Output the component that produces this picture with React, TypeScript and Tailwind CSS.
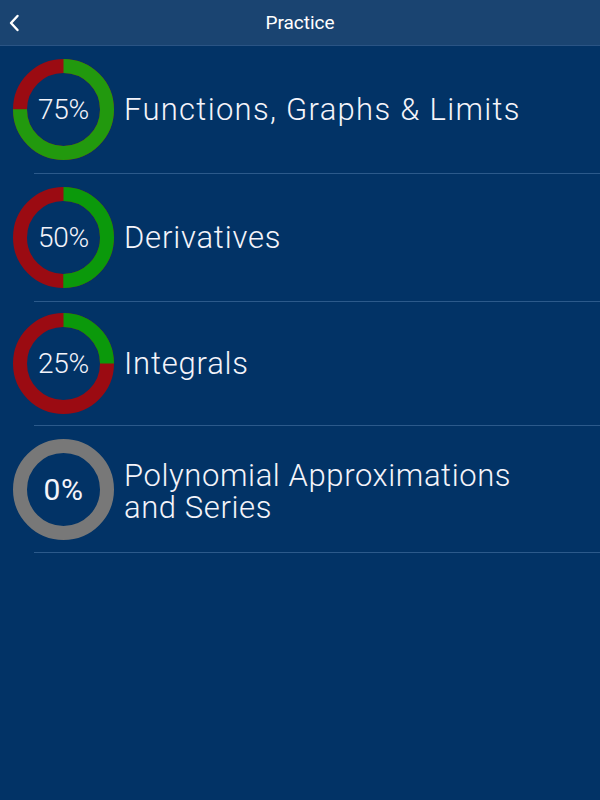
import React from "react";

type Item = { pct: number; label: string[]; h: string; green: string; track: string; mt: string };

const items: Item[] = [
  { pct: 75, label: ["Functions, Graphs & Limits"], h: "h-[127px]", green: "#22990e", track: "tracking-[1.3px]", mt: "mt-0" },
  { pct: 50, label: ["Derivatives"], h: "h-[127px]", green: "#0b990b", track: "tracking-[0.8px]", mt: "mt-0" },
  { pct: 25, label: ["Integrals"], h: "h-[123px]", green: "#0b990b", track: "tracking-[0.8px]", mt: "mt-0" },
  { pct: 0, label: ["Polynomial Approximations", "and Series"], h: "h-[126px]", green: "#0b990b", track: "tracking-[0.6px]", mt: "mt-[5px]" },
];

function Donut({ pct, green }: { pct: number; green: string }) {
  const size = 101;
  const sw = 14;
  const r = (size - sw) / 2;
  const c = 2 * Math.PI * r;
  const zero = pct === 0;
  return (
    <div className="relative w-[101px] h-[101px] shrink-0">
      <svg width={size} height={size} viewBox={`0 0 ${size} ${size}`} className="absolute inset-0">
        {zero ? (
          <circle cx={size / 2} cy={size / 2} r={r} fill="none" stroke="#787878" strokeWidth={sw} />
        ) : (
          <>
            <circle cx={size / 2} cy={size / 2} r={r} fill="none" stroke="#9b0b12" strokeWidth={sw} />
            <circle
              cx={size / 2}
              cy={size / 2}
              r={r}
              fill="none"
              stroke={green}
              strokeWidth={sw}
              strokeDasharray={`${(c * pct) / 100} ${c}`}
              transform={`rotate(-90 ${size / 2} ${size / 2})`}
            />
          </>
        )}
      </svg>
      <div
        className={`absolute inset-0 flex items-center justify-center text-[#f4f4fa] ${
          zero ? "text-[30px] font-normal tracking-[0.5px]" : "text-[28px] font-light tracking-[-0.3px]"
        }`}
        style={{ fontFamily: "Roboto, 'Liberation Sans', sans-serif" }}
      >
        {pct}%
      </div>
    </div>
  );
}

export default function App() {
  return (
    <div className="w-[600px] h-[800px] bg-[#023366] flex flex-col" style={{ fontFamily: "Roboto, 'Liberation Sans', sans-serif" }}>
      <div className="h-[46px] bg-[#1a4471] border-b border-[#2a5484] relative flex items-center justify-center pt-[2px] shrink-0">
        <svg className="absolute left-[8px] top-[14px]" width="12" height="18" viewBox="0 0 12 18">
          <path d="M9.5 2 L3 9 L9.5 16" fill="none" stroke="#ffffff" strokeWidth="2.4" strokeLinecap="round" strokeLinejoin="round" />
        </svg>
        <span className="text-white text-[19px] font-normal">Practice</span>
      </div>
      {items.map((it, i) => (
        <div key={i} className="relative">
          <div className={`${it.h} flex items-center pl-[13px]`}>
            <Donut pct={it.pct} green={it.green} />
            <div className={`ml-[10px] ${it.mt} text-[31px] font-light leading-[32px] ${it.track} text-[#f4f4fa]`}>
              {it.label.map((l, j) => (
                <div key={j}>{l}</div>
              ))}
            </div>
          </div>
          <div className="ml-[34px] h-px bg-[#2c5a8b]" />
        </div>
      ))}
    </div>
  );
}
